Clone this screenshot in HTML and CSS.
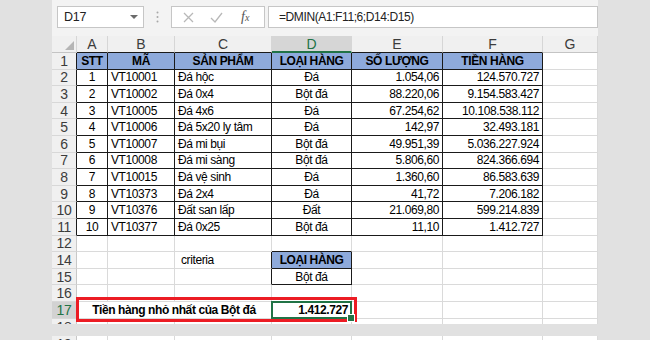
FILE: index.html
```html
<!DOCTYPE html>
<html lang="vi">
<head>
    <meta charset="UTF-8">
    <meta name="viewport" content="width=device-width, initial-scale=1.0">
    <title>DMIN - Tiền hàng nhỏ nhất</title>
    <link rel="stylesheet" href="styles.css">
</head>
<body>
    <div class="app">
        <div class="formula-bar">
            <div class="name-box">
                <span>D17</span>
                <svg width="8" height="5" viewBox="0 0 8 5"><path d="M0 0h8L4 4z" fill="#6b6b6b"/></svg>
            </div>
            <div class="grip">
                <svg width="3" height="12" viewBox="0 0 3 12">
                    <circle cx="1.5" cy="1.5" r="1" fill="#a8a8a8"/>
                    <circle cx="1.5" cy="6" r="1" fill="#a8a8a8"/>
                    <circle cx="1.5" cy="10.5" r="1" fill="#a8a8a8"/>
                </svg>
            </div>
            <div class="fx-tools">
                <svg class="tool-x" width="11" height="11" viewBox="0 0 11 11"><path d="M1 1l9 9M10 1l-9 9" stroke="#b8b8b8" stroke-width="1.3"/></svg>
                <svg class="tool-ok" width="13" height="11" viewBox="0 0 13 11"><path d="M1 6l4 4 7-9" fill="none" stroke="#b8b8b8" stroke-width="1.3"/></svg>
                <span class="fx">f<small>x</small></span>
            </div>
            <div class="formula">=DMIN(A1:F11;6;D14:D15)</div>
        </div>

        <div class="sheet">
            <div class="row heads">
                <div class="ch corner"><svg width="9" height="9" viewBox="0 0 9 9"><path d="M9 0v9H0z" fill="#b5b5b5"/></svg></div>
                <div class="ch tb">A</div>
                <div class="ch tb">B</div>
                <div class="ch tb">C</div>
                <div class="ch tb on">D</div>
                <div class="ch tb">E</div>
                <div class="ch tb">F</div>
                <div class="ch">G</div>
            </div>

            <div class="row">
                <div class="rh rb">1</div>
                <div class="c t hd">STT</div>
                <div class="c t hd">MÃ</div>
                <div class="c t hd">SẢN PHẨM</div>
                <div class="c t hd">LOẠI HÀNG</div>
                <div class="c t hd">SỐ LƯỢNG</div>
                <div class="c t hd">TIỀN HÀNG</div>
                <div class="c"></div>
            </div>
            <div class="row">
                <div class="rh rb">2</div>
                <div class="c t ctr">1</div>
                <div class="c t">VT10001</div>
                <div class="c t">Đá hộc</div>
                <div class="c t ctr">Đá</div>
                <div class="c t rt">1.054,06</div>
                <div class="c t rt">124.570.727</div>
                <div class="c"></div>
            </div>
            <div class="row">
                <div class="rh rb">3</div>
                <div class="c t ctr">2</div>
                <div class="c t">VT10002</div>
                <div class="c t">Đá 0x4</div>
                <div class="c t ctr">Bột đá</div>
                <div class="c t rt">88.220,06</div>
                <div class="c t rt">9.154.583.427</div>
                <div class="c"></div>
            </div>
            <div class="row">
                <div class="rh rb">4</div>
                <div class="c t ctr">3</div>
                <div class="c t">VT10005</div>
                <div class="c t">Đá 4x6</div>
                <div class="c t ctr">Đá</div>
                <div class="c t rt">67.254,62</div>
                <div class="c t rt">10.108.538.112</div>
                <div class="c"></div>
            </div>
            <div class="row">
                <div class="rh rb">5</div>
                <div class="c t ctr">4</div>
                <div class="c t">VT10006</div>
                <div class="c t">Đá 5x20 ly tâm</div>
                <div class="c t ctr">Đá</div>
                <div class="c t rt">142,97</div>
                <div class="c t rt">32.493.181</div>
                <div class="c"></div>
            </div>
            <div class="row">
                <div class="rh rb">6</div>
                <div class="c t ctr">5</div>
                <div class="c t">VT10007</div>
                <div class="c t">Đá mi bụi</div>
                <div class="c t ctr">Bột đá</div>
                <div class="c t rt">49.951,39</div>
                <div class="c t rt">5.036.227.924</div>
                <div class="c"></div>
            </div>
            <div class="row">
                <div class="rh rb">7</div>
                <div class="c t ctr">6</div>
                <div class="c t">VT10008</div>
                <div class="c t">Đá mi sàng</div>
                <div class="c t ctr">Bột đá</div>
                <div class="c t rt">5.806,60</div>
                <div class="c t rt">824.366.694</div>
                <div class="c"></div>
            </div>
            <div class="row">
                <div class="rh rb">8</div>
                <div class="c t ctr">7</div>
                <div class="c t">VT10015</div>
                <div class="c t">Đá vệ sinh</div>
                <div class="c t ctr">Đá</div>
                <div class="c t rt">1.360,60</div>
                <div class="c t rt">86.583.639</div>
                <div class="c"></div>
            </div>
            <div class="row">
                <div class="rh rb">9</div>
                <div class="c t ctr">8</div>
                <div class="c t">VT10373</div>
                <div class="c t">Đá 2x4</div>
                <div class="c t ctr">Đá</div>
                <div class="c t rt">41,72</div>
                <div class="c t rt">7.206.182</div>
                <div class="c"></div>
            </div>
            <div class="row">
                <div class="rh rb">10</div>
                <div class="c t ctr">9</div>
                <div class="c t">VT10376</div>
                <div class="c t">Đất san lấp</div>
                <div class="c t ctr">Đất</div>
                <div class="c t rt">21.069,80</div>
                <div class="c t rt">599.214.839</div>
                <div class="c"></div>
            </div>
            <div class="row">
                <div class="rh rb">11</div>
                <div class="c t ctr">10</div>
                <div class="c t">VT10377</div>
                <div class="c t">Đá 0x25</div>
                <div class="c t ctr">Bột đá</div>
                <div class="c t rt">11,10</div>
                <div class="c t rt">1.412.727</div>
                <div class="c"></div>
            </div>
            <div class="row">
                <div class="rh">12</div>
                <div class="c"></div>
                <div class="c"></div>
                <div class="c"></div>
                <div class="c tb"></div>
                <div class="c"></div>
                <div class="c"></div>
                <div class="c"></div>
            </div>
            <div class="row">
                <div class="rh">14</div>
                <div class="c"></div>
                <div class="c"></div>
                <div class="c tr indent">criteria</div>
                <div class="c t hd">LOẠI HÀNG</div>
                <div class="c"></div>
                <div class="c"></div>
                <div class="c"></div>
            </div>
            <div class="row">
                <div class="rh">15</div>
                <div class="c"></div>
                <div class="c"></div>
                <div class="c tr"></div>
                <div class="c t ctr">Bột đá</div>
                <div class="c"></div>
                <div class="c"></div>
                <div class="c"></div>
            </div>
            <div class="row">
                <div class="rh">16</div>
                <div class="c"></div>
                <div class="c"></div>
                <div class="c"></div>
                <div class="c"></div>
                <div class="c"></div>
                <div class="c"></div>
                <div class="c"></div>
            </div>
            <div class="row tall">
                <div class="rh on">17</div>
                <div class="c merged bold ctr">Tiền hàng nhỏ nhất của Bột đá</div>
                <div class="c bold rt sel">1.412.727</div>
                <div class="c"></div>
                <div class="c"></div>
                <div class="c"></div>
            </div>
            <div class="row cut">
                <div class="rh">18</div>
                <div class="c"></div>
                <div class="c"></div>
                <div class="c"></div>
                <div class="c"></div>
                <div class="c"></div>
                <div class="c"></div>
                <div class="c"></div>
            </div>

            <div class="mark"></div>
        </div>

        <div class="split"></div>

        <div class="sheet">
            <div class="row">
                <div class="rh">19</div>
                <div class="c"></div>
                <div class="c"></div>
                <div class="c"></div>
                <div class="c"></div>
                <div class="c"></div>
                <div class="c"></div>
                <div class="c"></div>
            </div>
        </div>
    </div>
</body>
</html>
```

FILE: styles.css
```css
* {
    box-sizing: border-box;
}
body {
    margin: 0;
    width: 650px;
    height: 340px;
    overflow: hidden;
    background: #e1e1e1;
    font-family: "Liberation Sans", Arial, sans-serif;
    color: #000;
}
.app {
    margin-left: 52px;
    width: 546px;
}

/* formula bar */
.formula-bar {
    display: flex;
    height: 36px;
    padding-top: 6px;
    background: #f3f3f3;
}
.name-box {
    display: flex;
    align-items: center;
    justify-content: space-between;
    width: 87px;
    height: 22px;
    margin-left: 5px;
    padding: 0 5px 0 6px;
    background: #fff;
    border: 1px solid #c6c6c6;
    font-size: 12.5px;
    letter-spacing: -0.3px;
    color: #222;
}
.grip {
    display: flex;
    align-items: center;
    justify-content: center;
    width: 27px;
    height: 22px;
}
.fx-tools {
    display: flex;
    align-items: center;
    width: 94px;
    height: 22px;
    background: #fff;
    border: 1px solid #c6c6c6;
}
.tool-x {
    margin-left: 11px;
}
.tool-ok {
    margin-left: 16px;
}
.fx {
    margin-left: 18px;
    font-family: "Liberation Serif", serif;
    font-style: italic;
    font-size: 14px;
    color: #555;
}
.fx small {
    font-size: 10px;
}
.formula {
    flex: 1;
    display: flex;
    align-items: center;
    height: 22px;
    margin-left: 3px;
    padding-left: 10px;
    background: #fff;
    border: 1px solid #c6c6c6;
    font-size: 12px;
    letter-spacing: -0.4px;
    color: #222;
}

/* sheet grid */
.sheet {
    position: relative;
    background: #fff;
}
.row {
    display: grid;
    grid-template-columns: 25px 31px 67px 97px 80px 91px 100px 55px;
    grid-auto-rows: 16.6px;
    height: 16.6px;
}
.heads {
    grid-auto-rows: 17px;
    height: 17px;
}
.tall {
    grid-auto-rows: 17px;
    height: 17px;
}
.cut {
    height: 5px;
    overflow: hidden;
}
.c, .rh, .ch {
    display: flex;
    align-items: center;
    min-width: 0;
    white-space: nowrap;
    border-right: 1px solid #dadada;
    border-bottom: 1px solid #dadada;
}
.c {
    padding: 0 3px;
    font-size: 12px;
    letter-spacing: -0.4px;
}
.rh {
    justify-content: center;
    background: #f0f0f0;
    color: #3c3c3c;
    font-size: 14px;
    letter-spacing: -0.4px;
    border-right-color: #c8c8c8;
    border-bottom-color: #d8d8d8;
}
.ch {
    justify-content: center;
    background: #f0f0f0;
    color: #3c3c3c;
    font-size: 14px;
    border-right-color: #d6d6d6;
    border-bottom-color: #c4c4c4;
}
.corner {
    justify-content: flex-end;
    align-items: flex-end;
    padding: 0 2px 2px 0;
}
.ch.on {
    background: #d6d6d6;
    color: #217346;
    border-bottom: 2px solid #217346;
}
.rh.on {
    background: #d2d2d2;
    color: #217346;
}

/* borders */
.t {
    border-right-color: #1a1a1a;
    border-bottom-color: #1a1a1a;
}
.rb, .tr {
    border-right-color: #1a1a1a;
}
.tb {
    border-bottom-color: #1a1a1a;
}
.ch.tb.on {
    border-bottom-color: #217346;
}

/* content */
.hd {
    justify-content: center;
    background: #8eaadb;
    font-weight: bold;
}
.ctr {
    justify-content: center;
}
.rt {
    justify-content: flex-end;
}
.bold {
    font-weight: bold;
}
.indent {
    padding-left: 6px;
}
.merged {
    grid-column: span 3;
}
.sel {
    position: relative;
}
.sel::after {
    content: "";
    position: absolute;
    left: -1px;
    top: -1px;
    right: -1px;
    bottom: -1px;
    border: 2px solid #217346;
}
.sel::before {
    content: "";
    position: absolute;
    right: -4px;
    bottom: -4px;
    width: 6px;
    height: 6px;
    background: #217346;
    border: 1px solid #fff;
    z-index: 1;
}
.mark {
    position: absolute;
    left: 24px;
    top: 261px;
    width: 281px;
    height: 25px;
    border: 3px solid #ec1c24;
}
.split {
    height: 12px;
}
```
